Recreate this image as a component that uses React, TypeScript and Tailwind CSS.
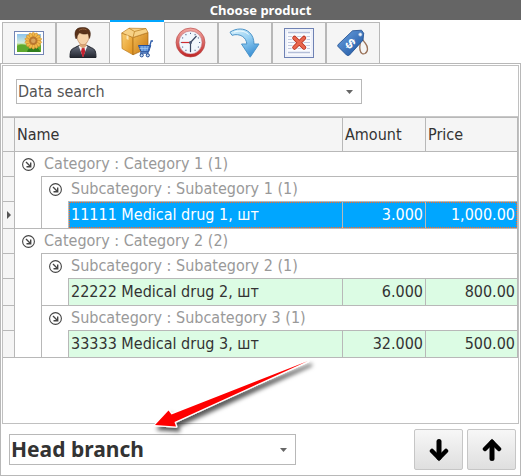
import { Fragment, useState } from "react";
import type { ReactNode } from "react";
import clsx from "clsx";

interface Product {
  id: number;
  name: string;
  amount: string;
  price: string;
}

interface Category {
  title: string;
  groups: { title: string; products: Product[] }[];
}

const categories: Category[] = [
  {
    title: "Category : Category 1 (1)",
    groups: [
      {
        title: "Subcategory : Subategory 1 (1)",
        products: [{ id: 1, name: "11111 Medical drug 1, шт", amount: "3.000", price: "1,000.00" }],
      },
    ],
  },
  {
    title: "Category : Category 2 (2)",
    groups: [
      {
        title: "Subcategory : Subategory 2 (1)",
        products: [{ id: 2, name: "22222 Medical drug 2, шт", amount: "6.000", price: "800.00" }],
      },
      {
        title: "Subcategory : Subcategory 3 (1)",
        products: [{ id: 3, name: "33333 Medical drug 3, шт", amount: "32.000", price: "500.00" }],
      },
    ],
  },
];

function PictureIcon() {
  const petals = Array.from({ length: 14 }, (_, i) => (i * 360) / 14);
  return (
    <svg viewBox="0 0 32 32" className="size-8" aria-hidden>
      <defs>
        <linearGradient id="sky" x1="0" y1="0" x2="0" y2="1">
          <stop offset="0" stopColor="#8cc3ee" />
          <stop offset="0.5" stopColor="#d5ecdc" />
          <stop offset="0.6" stopColor="#9ccb5c" />
          <stop offset="1" stopColor="#3f9424" />
        </linearGradient>
      </defs>
      <rect x="1.5" y="4.5" width="29" height="23" fill="#fff" stroke="#7385b4" />
      <rect x="4" y="7" width="24" height="18" fill="url(#sky)" />
      <path d="M4 19c5-3 9-1 12 1s8 1 12-2v7H4z" fill="#5ea92f" />
      <path d="M14 25c1-4 4-5 6-3 2-3 5-2 7 2v1z" fill="#2f7d1d" />
      {petals.map((angle) => (
        <ellipse key={angle} cx="20.3" cy="8.2" rx="1.6" ry="3" fill="#f2b94b" stroke="#c98420" strokeWidth="0.5" transform={`rotate(${angle} 20.3 13.7)`} />
      ))}
      <circle cx="20.3" cy="13.7" r="4.2" fill="#b9762f" />
      <circle cx="20.3" cy="13.7" r="2.3" fill="#d9a35a" />
    </svg>
  );
}

function PersonIcon() {
  return (
    <svg viewBox="0 0 32 32" className="size-8" aria-hidden>
      <defs>
        <linearGradient id="suit" x1="0" y1="0" x2="0" y2="1">
          <stop offset="0" stopColor="#6a7080" />
          <stop offset="1" stopColor="#23262f" />
        </linearGradient>
      </defs>
      <path d="M3 30.5c0-6 1-8.500 4.500-9.700L12 18.500h8l4.500 2.300c3.500 1.200 4.500 3.700 4.500 9.700z" fill="url(#suit)" stroke="#20232b" />
      <path d="M11.500 18.800 16 30l4.500-11.200z" fill="#f4f6fa" />
      <path d="M15 20.500h2.400l.8 4L16.500 30h-1l-1.500-5.500z" fill="#c3202e" />
      <path d="M12.500 15h7v4L16 21.500 12.500 19z" fill="#dca878" />
      <path d="M9.800 8c0-4 2.500-5.500 6.200-5.500s6.200 1.500 6.200 5.500c0 5-2.700 9.800-6.200 9.800S9.800 13 9.800 8z" fill="#f6d2a8" stroke="#b57c50" strokeWidth="0.6" />
      <path d="M8.700 11.500C6.800 5 8.700.700 14.500.600c4.500-.5 8.300 1 8.800 5.400.2 2-.2 4-1 5.500-.3-2-.6-3.800-1.500-5-2.300 1-6 .8-8-.7-1.800 1.200-2.700 3-3 5.700z" fill="#5a321a" stroke="#3c1f0d" strokeWidth="0.5" />
      <path d="M12 3.500c2-1.700 5-1.900 7.500-.7" stroke="#93603a" fill="none" />
    </svg>
  );
}

function BoxIcon() {
  return (
    <svg viewBox="0 0 32 32" className="size-8" aria-hidden>
      <defs>
        <linearGradient id="boxLeft" x1="0" y1="0" x2="1" y2="1">
          <stop offset="0" stopColor="#f9ce72" />
          <stop offset="1" stopColor="#e2921c" />
        </linearGradient>
        <linearGradient id="boxRight" x1="0" y1="0" x2="1" y2="1">
          <stop offset="0" stopColor="#f4bd55" />
          <stop offset="1" stopColor="#c47410" />
        </linearGradient>
      </defs>
      <path d="M.8 6 12 10.500V27.800L1 21.500z" fill="url(#boxLeft)" stroke="#b97b22" strokeWidth="0.700" />
      <path d="M12 10.500 27 5.500V21L12 27.800z" fill="url(#boxRight)" stroke="#a5640f" strokeWidth="0.700" />
      <path d="M.8 6 8 1.200 25 1.500 27 5.500 12 10.500z" fill="#f7d184" stroke="#b97b22" strokeWidth="0.700" />
      <path d="M8 1.200 13.500 4.500 25 1.500M13.500 4.500 12 10.500" fill="none" stroke="#bd8428" strokeWidth="0.800" />
      <path d="M5.500 8v4l2 1V9z" fill="#fbe7b5" />
      <path d="M17.500 18.500h12.200l-2 6.200H20z" fill="#5b91d8" stroke="#244f9b" />
      <path d="M21 19v5M24 19v5M27 19v5M18.500 21.500h10" stroke="#a8caf3" strokeWidth="0.700" />
      <path d="M32 14h-1.800l-3.500 12H19" fill="none" stroke="#2e5dab" strokeWidth="1.300" />
      <circle cx="20.700" cy="28.300" r="1.600" fill="#c9def8" stroke="#1e478f" />
      <circle cx="26.800" cy="28.300" r="1.600" fill="#c9def8" stroke="#1e478f" />
    </svg>
  );
}

function ClockIcon() {
  const ticks = Array.from({ length: 12 }, (_, i) => i * 30);
  return (
    <svg viewBox="0 0 32 32" className="size-8" aria-hidden>
      <defs>
        <linearGradient id="ring" x1="0" y1="0" x2="0" y2="1">
          <stop offset="0" stopColor="#f0a49e" />
          <stop offset="1" stopColor="#c22a2a" />
        </linearGradient>
      </defs>
      <circle cx="15.500" cy="15.500" r="13" fill="#f2f7fd" stroke="url(#ring)" strokeWidth="2.800" />
      <circle cx="15.500" cy="15.500" r="14.500" fill="none" stroke="#b23c3d" strokeWidth="0.600" />
      <circle cx="15.500" cy="15.500" r="11.500" fill="none" stroke="#b4525a" strokeWidth="0.500" />
      {ticks.map((angle) => (
        <path key={angle} d="M15.500 5.800v1.200" stroke="#53688f" transform={`rotate(${angle} 15.5 15.5)`} />
      ))}
      <path d="M15.500 15.500H6.500" stroke="#d12c30" strokeWidth="1.200" />
      <path d="m15.500 15.500 6-6.500M15.500 15.500V25" stroke="#3a4762" strokeWidth="1.200" />
      <circle cx="15.500" cy="15.500" r="1.500" fill="#4c5a78" />
    </svg>
  );
}

function TurnArrowIcon() {
  return (
    <svg viewBox="0 0 32 32" className="size-8" aria-hidden>
      <defs>
        <linearGradient id="turn" x1="0" y1="0" x2="0.600" y2="1">
          <stop offset="0" stopColor="#dcf3fc" />
          <stop offset="0.500" stopColor="#98d1f3" />
          <stop offset="1" stopColor="#3f93d6" />
        </linearGradient>
      </defs>
      <path d="M1 5.200C7 1 15.500.800 20.500 5.500c3.200 3 4.300 6.500 4.500 11.500h5L21.200 30.200 12.500 17h5.300C17.500 10.500 11 5.800 3 8.300z" fill="url(#turn)" stroke="#4c94c9" strokeLinejoin="round" />
      <path d="M5 5.200c5.500-2.200 11-1.200 14.500 2.300" fill="none" stroke="#f3fcff" />
    </svg>
  );
}

function DeleteDocIcon() {
  return (
    <svg viewBox="0 0 32 32" className="size-8" aria-hidden>
      <rect x="1.500" y="1.500" width="29" height="29" fill="#f9fafe" stroke="#6f82b4" />
      <rect x="3" y="3" width="26" height="26" fill="none" stroke="#e2e7f4" />
      <path d="M5 5.500h22M5 25.500h22" stroke="#b4bed8" strokeWidth="1.500" />
      <path d="M5 9.500h22M5 12.500h22M5 15.500h22M5 18.500h22M5 21.500h22" stroke="#c3cbe0" />
      <path d="m11.500 11 9.500 9.500M21 11l-9.500 9.500" stroke="#fff" strokeWidth="6" strokeLinecap="round" />
      <path d="m11.500 11 9.500 9.500M21 11l-9.500 9.500" stroke="#b22e1f" strokeWidth="4.500" strokeLinecap="round" />
      <path d="m11.500 11 9.500 9.500M21 11l-9.500 9.500" stroke="#e9664e" strokeWidth="3" strokeLinecap="round" />
    </svg>
  );
}

function PriceTagIcon() {
  return (
    <svg viewBox="0 0 32 32" className="size-8" aria-hidden>
      <defs>
        <linearGradient id="tag" x1="0" y1="0" x2="1" y2="1">
          <stop offset="0" stopColor="#6fa5e2" />
          <stop offset="1" stopColor="#174f9d" />
        </linearGradient>
      </defs>
      <path d="M23 8c2 6-1 8 0 15 .8 3.500 3 4.500 5 3.500 3.500-2 3-7 .5-10-1.500-2-3.500-4-5-7.500" fill="none" stroke="#987057" strokeWidth="1.300" />
      <path d="M1.200 17.500 15.500 3.800 24.500 3.200l2.200 3-.7 7L12.500 28c-1 .8-2 .7-3 0L1 19.500c-.5-.7-.4-1.400.2-2z" fill="url(#tag)" stroke="#1c4a8c" strokeWidth="0.800" />
      <circle cx="23.300" cy="7.500" r="1.700" fill="#eef4fb" stroke="#93aed1" strokeWidth="0.600" />
      <text x="13.500" y="21.500" textAnchor="middle" fontSize="14" fontWeight="700" fill="#fff" fontFamily="Liberation Sans, sans-serif" transform="rotate(45 13.500 16.500)">$</text>
    </svg>
  );
}

const tabs: { label: string; icon: ReactNode }[] = [
  { label: "Pictures", icon: <PictureIcon /> },
  { label: "Customer", icon: <PersonIcon /> },
  { label: "Products", icon: <BoxIcon /> },
  { label: "History", icon: <ClockIcon /> },
  { label: "Returns", icon: <TurnArrowIcon /> },
  { label: "Cancelled", icon: <DeleteDocIcon /> },
  { label: "Discounts", icon: <PriceTagIcon /> },
];

function ExpandIcon() {
  return (
    <svg viewBox="0 0 13 13" className="size-[13px] shrink-0" fill="none" stroke="#444" aria-hidden>
      <circle cx="6.500" cy="6.500" r="5.900" strokeWidth="1.100" />
      <path d="M4 4l4.500 4.500M8.700 4.500v4.200H4.500" strokeWidth="1.400" />
    </svg>
  );
}

function Caret() {
  return (
    <svg viewBox="0 0 7 4" className="pointer-events-none absolute inset-y-0 right-[9px] my-auto h-1 w-[7px]" aria-hidden>
      <path d="M0 0h7L3.500 4z" fill="#666" />
    </svg>
  );
}

function MoveArrow({ up = false }: { up?: boolean }) {
  return (
    <svg viewBox="0 0 20 24" className={clsx("h-6 w-5", up && "rotate-180")} fill="none" stroke="#000" strokeWidth="5" strokeLinecap="round" aria-hidden>
      <path d="M10 3.500v16" />
      <path d="m3 13 7 7 7-7" strokeWidth="4.500" />
    </svg>
  );
}

function Indicator({ active = false }: { active?: boolean }) {
  return (
    <td className="border-t border-[#b8b8b8] bg-[#f5f5f5] p-0">
      {active && (
        <svg viewBox="0 0 4 8" className="mx-auto h-2 w-1" aria-label="Current row">
          <path d="M0 0v8l4-4z" fill="#555" />
        </svg>
      )}
    </td>
  );
}

function GroupLabel({ children }: { children: ReactNode }) {
  return (
    <span className="flex h-6 items-center gap-[9px] pl-[7px] text-[#999]">
      <ExpandIcon />
      {children}
    </span>
  );
}

function ProductRow({ product, selected, onSelect }: { product: Product; selected: boolean; onSelect: () => void }) {
  const cell = "border-t border-l border-[#b8b8b8] p-0";
  // the focus frame is a two-colour checker showing through 1px of padding
  const frame = clsx(
    "h-[26px]",
    selected
      ? "bg-[repeating-conic-gradient(#ff6a1f_0_25%,#00a6ff_0_50%)] bg-size-[2px_2px] py-px text-white"
      : "bg-[#dcfce4] text-[#333]",
  );
  const inner = clsx("flex h-full items-center", selected && "bg-[#00a6ff]");

  return (
    <tr onClick={onSelect} aria-selected={selected}>
      <Indicator active={selected} />
      <td className="border-l border-[#b8b8b8] p-0" />
      <td className="border-l border-[#b8b8b8] p-0" />
      <td className={cell}>
        <div className={clsx(frame, selected && "pl-px")}>
          <div className={clsx(inner, selected ? "pl-px" : "pl-0.5")}>{product.name}</div>
        </div>
      </td>
      <td className={cell}>
        <div className={frame}>
          <div className={clsx(inner, "justify-end pr-0.5")}>{product.amount}</div>
        </div>
      </td>
      <td className={cell}>
        <div className={clsx(frame, selected && "pr-px")}>
          <div className={clsx(inner, "justify-end", selected ? "pr-px" : "pr-0.5")}>{product.price}</div>
        </div>
      </td>
    </tr>
  );
}

export default function App() {
  const [activeTab, setActiveTab] = useState("Products");
  const [selectedId, setSelectedId] = useState(1);

  return (
    <main className="flex min-h-screen flex-col bg-white font-['DejaVu_Sans_Condensed','DejaVu_Sans',sans-serif] text-base leading-5 text-[#333]">
      <h1 className="h-5 bg-[#656565] text-center font-['Noto_Sans',sans-serif] text-[13px] font-bold text-white">Choose product</h1>

      <div role="tablist" className="flex pl-0.5">
        {tabs.map((tab) => {
          const active = tab.label === activeTab;
          return (
            <button
              key={tab.label}
              type="button"
              role="tab"
              aria-selected={active}
              aria-label={tab.label}
              onClick={() => setActiveTab(tab.label)}
              className={clsx(
                "flex w-[54px] items-center justify-center",
                active
                  ? "-mb-px h-11 border-t-2 border-[#00a6ff] bg-white"
                  : "mt-0.5 h-[41px] border-x border-t border-[#b8b8b8] bg-[#f5f5f5]",
              )}
            >
              {tab.icon}
            </button>
          );
        })}
      </div>

      <div className="flex flex-1 flex-col border border-[#b8b8b8] px-px pt-px">
        <section className="flex flex-1 flex-col border border-[#c0c0c0]">
          <div className="border-b border-[#c8c8c8] px-[13px] pt-[13px] pb-3">
            <div className="relative max-w-[346px]">
              <select
                aria-label="Data search"
                className="block h-[25px] w-full appearance-none border border-[#b8b8b8] bg-white pl-px leading-[23px] text-[#555] outline-none"
              >
                <option>Data search</option>
              </select>
              <Caret />
            </div>
          </div>

          <table className="w-full table-fixed border-separate border-spacing-0 border-r border-b border-[#b8b8b8]">
            <colgroup>
              <col className="w-[11px]" />
              <col className="w-[27px]" />
              <col className="w-[27px]" />
              <col />
              <col className="w-[83px]" />
              <col className="w-[92px]" />
            </colgroup>
            <thead>
              <tr className="h-[34px] bg-[#f5f5f5] text-left">
                <td className="border-t border-[#b8b8b8] p-0" />
                <th colSpan={3} className="border-t border-l border-[#b8b8b8] p-0 pl-0.5 font-normal">Name</th>
                <th className="border-t border-l border-[#b8b8b8] p-0 pl-0.5 font-normal">Amount</th>
                <th className="border-t border-l border-[#b8b8b8] p-0 pl-0.5 font-normal">Price</th>
              </tr>
            </thead>
            <tbody>
              {categories.map((category) => (
                <Fragment key={category.title}>
                  <tr>
                    <Indicator />
                    <td colSpan={5} className="border-t border-l border-[#b8b8b8] p-0">
                      <GroupLabel>{category.title}</GroupLabel>
                    </td>
                  </tr>
                  {category.groups.map((group) => (
                    <Fragment key={group.title}>
                      <tr>
                        <Indicator />
                        <td className="border-l border-[#b8b8b8] p-0" />
                        <td colSpan={4} className="border-t border-l border-[#b8b8b8] p-0">
                          <GroupLabel>{group.title}</GroupLabel>
                        </td>
                      </tr>
                      {group.products.map((product) => (
                        <ProductRow
                          key={product.id}
                          product={product}
                          selected={product.id === selectedId}
                          onSelect={() => setSelectedId(product.id)}
                        />
                      ))}
                    </Fragment>
                  ))}
                </Fragment>
              ))}
            </tbody>
          </table>
        </section>

        <footer className="flex items-center justify-between py-[5px] pr-[3px] pl-[7px]">
          <div className="relative w-[287px]">
            <select
              aria-label="Branch"
              className="block h-[31px] w-full appearance-none border border-[#b8b8b8] bg-white pl-px font-['Noto_Sans',sans-serif] text-[21px] leading-[29px] font-bold text-[#333] outline-none"
            >
              <option>Head branch</option>
            </select>
            <Caret />

            {/* callout pointing at the branch selector */}
            <svg viewBox="0 0 170 80" className="pointer-events-none absolute bottom-[29px] left-[141px] h-20 w-[170px] overflow-visible" aria-hidden>
              <defs>
                <filter id="calloutShadow" x="-20%" y="-20%" width="140%" height="150%">
                  <feDropShadow dx="3" dy="4" stdDeviation="2" floodColor="#000" floodOpacity="0.650" />
                </filter>
              </defs>
              <path
                d="M5 69 18.500 54.500 21.500 58.500 158 5 24.500 66 26 70.500z"
                fill="#fe0000"
                stroke="#fff"
                strokeWidth="2.500"
                strokeLinejoin="round"
                paintOrder="stroke"
                filter="url(#calloutShadow)"
              />
            </svg>
          </div>

          <div className="flex gap-1">
            <button type="button" aria-label="Move down" className="flex h-[41px] w-[49px] items-center justify-center rounded-xs border border-[#c6c6c6] bg-linear-to-b from-[#f7f7f7] to-[#dfdfdf]">
              <MoveArrow />
            </button>
            <button type="button" aria-label="Move up" className="flex h-[41px] w-[49px] items-center justify-center rounded-xs border border-[#c6c6c6] bg-linear-to-b from-[#f7f7f7] to-[#dfdfdf]">
              <MoveArrow up />
            </button>
          </div>
        </footer>
      </div>
    </main>
  );
}
